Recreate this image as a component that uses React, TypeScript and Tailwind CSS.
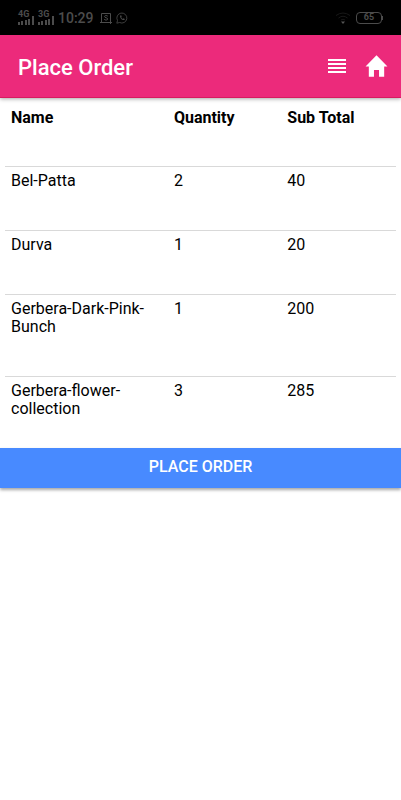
import React from "react"

const items = [
  { name: "Bel-Patta", quantity: 2, subTotal: 40 },
  { name: "Durva", quantity: 1, subTotal: 20 },
  { name: "Gerbera-Dark-Pink-Bunch", quantity: 1, subTotal: 200 },
  { name: "Gerbera-flower-collection", quantity: 3, subTotal: 285 },
]

function Signal({ label }: { label: string }) {
  return (
    <div className="flex w-5 flex-col">
      <span className="text-[9px] leading-[9px] font-bold">{label}</span>
      <svg viewBox="0 0 17 9" className="-mt-[3px] h-[9px] w-[17px] fill-current" aria-hidden="true">
        <rect x="0" y="6" width="2" height="3" />
        <rect x="3" y="5" width="2" height="4" />
        <rect x="7" y="4" width="2" height="5" />
        <rect x="10" y="3" width="2" height="6" />
        <rect x="14" y="0" width="2" height="9" />
      </svg>
    </div>
  )
}

function StatusBar() {
  return (
    <div className="flex h-[35px] items-center justify-between bg-black px-[18px] text-[#4c4c4c]">
      <div className="flex items-center">
        <Signal label="4G" />
        <Signal label="3G" />
        <span className="text-sm font-medium">10:29</span>
        <svg viewBox="0 0 12 12" className="ml-1.5 size-3" fill="none" stroke="currentColor" aria-hidden="true">
          <path d="M1.5 8V1.5H10.5V8M0 10.5H12M1.5 8V10.5M10.5 8V12" />
          <path d="M7.8 4.2C7 3.2 4.5 3.3 4.5 4.6C4.5 6 7.7 5.4 7.7 7C7.7 8.4 5 8.4 4.2 7.3" />
        </svg>
        <svg viewBox="0 0 12 12" className="ml-1 size-3" fill="none" stroke="currentColor" aria-hidden="true">
          <path d="M0.8 11.2L1.5 8.5A5 5 0 1 1 3.6 10.5Z" strokeWidth="0.8" />
          <path d="M4.2 3.4C3.4 5.6 6.2 8.6 8.4 8L8.8 7L7.5 6.3L6.8 6.9C6 6.6 5.4 5.9 5.2 5.2L5.7 4.7L5.2 3.3Z" fill="currentColor" stroke="none" />
        </svg>
      </div>
      <div className="flex items-center gap-[5px]">
        <svg viewBox="0 0 16 12" className="h-3 w-4" fill="none" stroke="#181818" aria-hidden="true">
          <path d="M1 3.5Q8 -1.5 15 3.5M3.5 6Q8 2.5 12.5 6M5.8 8Q8 6.5 10.2 8" />
          <path d="M6 9.5H10L8 12Z" fill="#555" stroke="none" />
        </svg>
        <div className="flex items-center">
          <span className="flex h-3 w-[26px] items-center justify-center rounded-sm border border-current text-[9px] leading-none font-bold">
            65
          </span>
          <span className="h-1 w-px bg-current" />
        </div>
      </div>
    </div>
  )
}

function Header() {
  return (
    <header className="relative flex h-[63px] items-center justify-between border-b border-[#d81b60] bg-[#ec2a7b] pr-[11px] pl-[18px] text-white shadow-[0_1px_4px_rgba(0,0,0,0.35)]">
      <h1 className="pt-0.5 text-[22px] font-medium">Place Order</h1>
      <nav className="flex items-center gap-[17px]">
        <button type="button" aria-label="Orders">
          <svg viewBox="0 0 18 14" className="h-3.5 w-[18px] fill-current" aria-hidden="true">
            <path d="M0 0H18V2H0ZM0 4H18V6H0ZM0 8H18V10H0ZM0 12H18V14H0Z" />
          </svg>
        </button>
        <a href="#home" aria-label="Home">
          <svg viewBox="0 0 512 512" className="size-[27px] fill-current" aria-hidden="true">
            <path d="M208 448V320h96v128h97.6V256H464L256 42 48 256h62.4v192z" />
          </svg>
        </a>
      </nav>
    </header>
  )
}

export default function App() {
  return (
    <div className="min-h-screen bg-white font-[Roboto,sans-serif] text-black">
      <StatusBar />
      <Header />
      <main>
        <div className="px-[5px] pt-[5px]">
          <table className="w-full table-fixed border-collapse text-left text-[16px] leading-[18px]">
            <colgroup>
              <col className="w-5/12" />
              <col className="w-[29%]" />
              <col />
            </colgroup>
            <thead>
              <tr className="align-top">
                <th className="px-1.5 pt-1.5 pb-[39px] font-bold">Name</th>
                <th className="px-1.5 pt-1.5 pb-[39px] font-bold">Quantity</th>
                <th className="px-1.5 pt-1.5 pb-[39px] font-bold">Sub Total</th>
              </tr>
            </thead>
            <tbody>
              {items.map((item) => (
                <tr key={item.name} className="border-t border-[#d9d9d9] align-top last:[&>td]:pb-[30px]">
                  <td className="px-1.5 pt-[5px] pb-10">{item.name}</td>
                  <td className="px-1.5 pt-[5px] pb-10">{item.quantity}</td>
                  <td className="px-1.5 pt-[5px] pb-10">{item.subTotal}</td>
                </tr>
              ))}
            </tbody>
          </table>
        </div>
        <button
          type="button"
          className="h-10 w-full bg-[#488aff] pb-0.5 text-[16px] font-medium text-white uppercase shadow-[0_2px_3px_rgba(0,0,0,0.35)]"
        >
          Place Order
        </button>
      </main>
    </div>
  )
}
